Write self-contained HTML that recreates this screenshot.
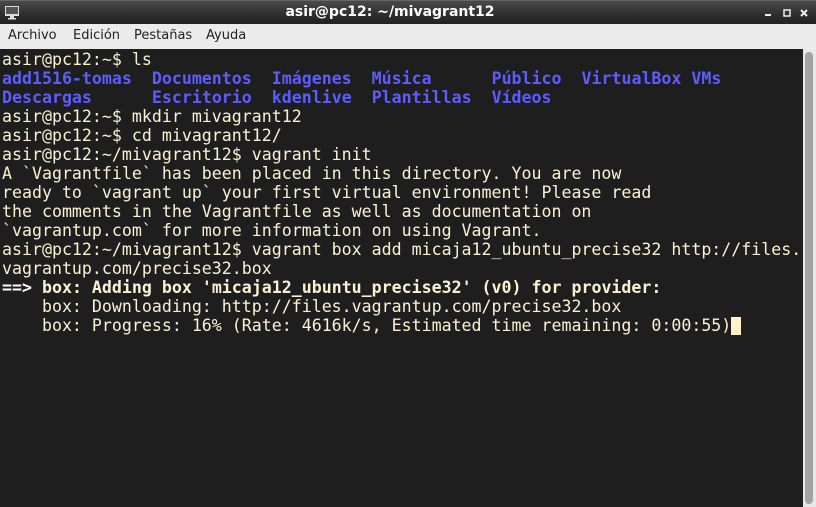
<!DOCTYPE html>
<html><head><meta charset="utf-8"><style>
body{margin:0;width:816px;height:507px;overflow:hidden;background:#1e1e1e;position:relative;font-family:"DejaVu Sans",sans-serif}
#title{position:absolute;left:0;top:0;width:816px;height:24px;background:linear-gradient(#4a4a4a,#2e2e2e 60%,#222);border-top:1px solid #666;box-sizing:border-box}
#title .t{position:absolute;left:0;width:780px;top:3px;text-align:center;color:#fff;font-weight:bold;font-size:14px}
#menu{position:absolute;left:0;top:24px;width:816px;height:25px;background:#ebebeb;font-size:13px;color:#222}
#menu span{position:absolute;top:4px}
#term{position:absolute;left:2px;top:50px;font-family:"DejaVu Sans Mono","Liberation Mono",monospace;font-size:16.6px;line-height:19px;color:#fbf1d2;white-space:pre;letter-spacing:0}
.b{color:#5c5cff;font-weight:bold}
.w{font-weight:bold}
.cur{display:inline-block;width:10px;height:18px;background:#fff1c8;vertical-align:-4px}
#sb{position:absolute;left:803px;top:49px;width:13px;height:458px;background:#e8e8e8}
#sb div{position:absolute;left:2px;top:3px;width:8px;height:452px;background:#a3a3a3;border-radius:4px}
</style></head><body>
<div id="title">
<svg style="position:absolute;left:5px;top:5px" width="14" height="14"><rect x="0" y="0" width="14" height="10" fill="#ddd"/><rect x="1" y="1" width="12" height="7" fill="#555"/><rect x="5" y="10" width="4" height="2" fill="#ddd"/><rect x="3" y="12" width="8" height="1.5" fill="#ddd"/></svg>
<div class="t">asir@pc12: ~/mivagrant12</div>
<svg style="position:absolute;left:760px;top:8px" width="50" height="10"><rect x="5" y="5" width="6" height="2" fill="#eee"/><rect x="24" y="1" width="6" height="6" fill="none" stroke="#eee" stroke-width="1.5"/><path d="M41 1L47 7M47 1L41 7" stroke="#eee" stroke-width="2"/></svg>
</div>
<div id="menu"><span style="left:8px">Archivo</span><span style="left:73px">Edición</span><span style="left:134px">Pestañas</span><span style="left:206px">Ayuda</span></div>
<div id="term">asir@pc12:~$ ls
<span class="b">add1516-tomas</span>  <span class="b">Documentos</span>  <span class="b">Imágenes</span>  <span class="b">Música</span>      <span class="b">Público</span>  <span class="b">VirtualBox VMs</span>
<span class="b">Descargas</span>      <span class="b">Escritorio</span>  <span class="b">kdenlive</span>  <span class="b">Plantillas</span>  <span class="b">Vídeos</span>
asir@pc12:~$ mkdir mivagrant12
asir@pc12:~$ cd mivagrant12/
asir@pc12:~/mivagrant12$ vagrant init
A `Vagrantfile` has been placed in this directory. You are now
ready to `vagrant up` your first virtual environment! Please read
the comments in the Vagrantfile as well as documentation on
`vagrantup.com` for more information on using Vagrant.
asir@pc12:~/mivagrant12$ vagrant box add micaja12_ubuntu_precise32 http://files.
vagrantup.com/precise32.box
<span class="w" style="color:#fff">==&gt;</span> <span class="w">box: Adding box 'micaja12_ubuntu_precise32' (v0) for provider:</span>
    box: Downloading: http://files.vagrantup.com/precise32.box
    box: Progress: 16% (Rate: 4616k/s, Estimated time remaining: 0:00:55)<span class="cur"></span></div>
<div id="sb"><div></div></div>
</body></html>
